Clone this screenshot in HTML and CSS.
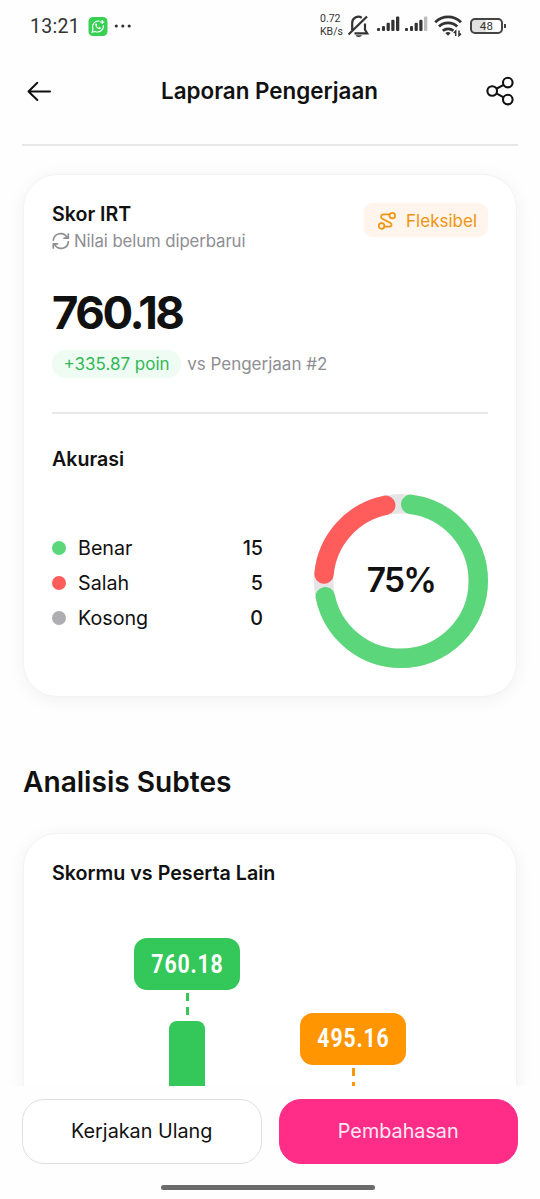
FILE: index.html
```html
<!DOCTYPE html>
<html lang="id">

<head>
    <meta charset="utf-8">
    <meta name="viewport" content="width=device-width, initial-scale=1">
    <title>Laporan Pengerjaan</title>
    <link rel="stylesheet" href="styles.css">
</head>

<body>
    <div class="screen">
        <div class="status">
            <span class="clock">13:21</span>
            <svg class="wa" width="20" height="19" viewBox="0 0 20 19">
                <rect x="0.5" y="0" width="19" height="19" rx="4.5" fill="#38cf55" />
                <path d="M11.8 4.2A5.8 5.8 0 0 0 5 12l-.9 3.2 3.2-.8a5.8 5.8 0 0 0 8.1-6" fill="none" stroke="#fff" stroke-width="1.1" />
                <path d="M7.5 6.7c-1.2 2 2.4 6 4.6 5.3.7-.3.9-.8.8-1.3l-1.5-.7-.8.8c-.9-.3-1.6-1-2-1.9l.6-.9-.6-1.4z" fill="#fff" />
                <path d="M14.3 3.1v4M12.3 5.1h4" stroke="#fff" stroke-width="1.2" />
            </svg>
            <svg class="dots" width="18" height="4" viewBox="0 0 18 4" fill="#333">
                <circle cx="2.3" cy="2" r="1.6" />
                <circle cx="8.8" cy="2" r="1.6" />
                <circle cx="15.2" cy="2" r="1.6" />
            </svg>
            <span class="speed">0.72<br>KB/s</span>
            <svg class="bell" width="23" height="24" viewBox="0 0 23 24" fill="none" stroke="#333" stroke-width="2.2">
                <path d="M4.2 16V9.2a6.2 6.2 0 0 1 9.6-5.4M17 9.5v6.2l2.2 3.6H6.5M.5 20.5 19 2.5" />
                <path d="M7.5 21.3H14a3.3 2.2 0 0 1-6.5 0z" fill="#333" stroke="none" />
            </svg>
            <svg class="signal" width="24" height="16" viewBox="0 0 24 16" fill="#333">
                <rect x="0" y="12" width="3" height="3" rx="1" />
                <rect x="5" y="10" width="3" height="5" rx="1" />
                <rect x="9.6" y="6.8" width="3.2" height="8.2" rx="1" />
                <rect x="14.3" y="3.8" width="3.2" height="11.2" rx="1" />
                <rect x="19" y="0.5" width="3.3" height="14.5" rx="1" />
            </svg>
            <svg class="signal" width="24" height="16" viewBox="0 0 24 16" fill="#333">
                <rect x="0" y="12" width="3" height="3" rx="1" />
                <rect x="5" y="10" width="3" height="5" rx="1" />
                <rect x="9.6" y="6.8" width="3.2" height="8.2" rx="1" />
                <rect x="14.3" y="3.8" width="3.2" height="11.2" rx="1" />
                <rect x="19" y="0.5" width="3.3" height="14.5" rx="1" fill="#bbb" />
            </svg>
            <svg class="wifi" width="29" height="22" viewBox="0 0 29 22" fill="none" stroke="#333" stroke-width="2.8">
                <path d="M1.2 7.2a18.5 18.5 0 0 1 25.8 0M5 11.6a13 13 0 0 1 18.2 0M8.8 15.8a8 8 0 0 1 10.6 0" />
                <path d="M11.3 18a4.5 4.5 0 0 1 5.4 0L14 20.8z" fill="#333" stroke="none" />
                <path d="M21.7 21v-5l-2 2M25 15.6v5l2-2" stroke-width="1.5" />
            </svg>
            <span class="battery">48</span>
            <i class="battery-tip"></i>
        </div>

        <div class="header">
            <svg width="26" height="24" viewBox="0 0 26 24" fill="none" stroke="#111" stroke-width="2" stroke-linecap="round" stroke-linejoin="round">
                <path d="M24 12.5H2.5M11.3 3.7 2.5 12.5l8.8 8.5" />
            </svg>
            <h1>Laporan Pengerjaan</h1>
            <svg width="28" height="30" viewBox="0 0 28 30" fill="none" stroke="#111" stroke-width="2.1">
                <circle cx="6.2" cy="15" r="4.8" />
                <circle cx="21.8" cy="6.6" r="4.8" />
                <circle cx="21.8" cy="23.6" r="4.8" />
                <path d="m10.4 12.7 7.2-3.8M10.4 17.3l7.2 4" />
            </svg>
        </div>

        <div class="content">
            <div class="card score-card">
                <div class="card-top">
                    <div>
                        <h3>Skor IRT</h3>
                        <div class="updated">
                            <svg width="18" height="18" viewBox="0 0 18 18" fill="none" stroke="#8e8e93" stroke-width="1.7" stroke-linecap="round" stroke-linejoin="round">
                                <path d="M1.3 8.2a7.3 7.3 0 0 1 13.6-2.9M16.3 2v4.2h-4.2M16.3 9.8a7.3 7.3 0 0 1-13.6 2.9M1.3 16v-4.2h4.2" />
                            </svg>
                            <span>Nilai belum diperbarui</span>
                        </div>
                    </div>
                    <div class="tag">
                        <svg width="20" height="20" viewBox="0 0 20 20" fill="none" stroke="#f09410" stroke-width="1.7" stroke-linecap="round">
                            <circle cx="15.3" cy="4.6" r="2.8" />
                            <circle cx="4.6" cy="15" r="2.8" />
                            <path d="M12.4 3.3H6.5a2.4 2.4 0 0 0-1.2 4.5l8.2 4.3a1.9 1.9 0 0 1-.9 3.6H7.6" />
                        </svg>
                        <span>Fleksibel</span>
                    </div>
                </div>
                <div class="score">760.18</div>
                <div class="compare">
                    <span class="gain">+335.87 poin</span>
                    <span>vs Pengerjaan #2</span>
                </div>
                <hr>
                <h3>Akurasi</h3>
                <div class="accuracy">
                    <div class="legend">
                        <div class="row"><i class="dot green"></i>Benar<b>15</b></div>
                        <div class="row"><i class="dot red"></i>Salah<b>5</b></div>
                        <div class="row"><i class="dot grey"></i>Kosong<b>0</b></div>
                    </div>
                    <div class="donut">
                        <svg width="174" height="174" viewBox="0 0 174 174">
                            <g fill="none" stroke-width="19.4" transform="rotate(-90 87 87)">
                                <circle cx="87" cy="87" r="77.3" stroke="#e5e5e7" />
                                <circle cx="87" cy="87" r="77.3" stroke="#ff5c5c" stroke-linecap="round" pathLength="360" stroke-dasharray="73.4 286.6" stroke-dashoffset="-275.2" />
                                <circle cx="87" cy="87" r="77.3" stroke="#5cd67a" stroke-linecap="round" pathLength="360" stroke-dasharray="251 109" stroke-dashoffset="-7.3" />
                            </g>
                        </svg>
                        <span class="percent">75%</span>
                    </div>
                </div>
            </div>

            <h2>Analisis Subtes</h2>

            <div class="card chart-card">
                <h3>Skormu vs Peserta Lain</h3>
                <div class="chart">
                    <div class="column mine">
                        <div class="value"><span>760.18</span></div>
                        <i class="dash"></i>
                        <i class="dash"></i>
                        <div class="bar"></div>
                    </div>
                    <div class="column others">
                        <div class="value"><span>495.16</span></div>
                        <i class="dash"></i>
                        <i class="dash"></i>
                        <div class="bar"></div>
                    </div>
                </div>
            </div>
        </div>

        <div class="footer">
            <div class="buttons">
                <button class="btn retry">Kerjakan Ulang</button>
                <button class="btn review">Pembahasan</button>
            </div>
            <div class="home"></div>
        </div>
    </div>
</body>

</html>
```

FILE: styles.css
```css
* {
    box-sizing: border-box;
}

body {
    margin: 0;
    background: #fefefe;
    color: #111;
    font-family: Inter, "Liberation Sans", sans-serif;
}

h1, h2, h3 {
    margin: 0;
    font-weight: 600;
}

svg {
    display: block;
    flex: none;
}

.screen {
    display: flex;
    flex-direction: column;
    width: 540px;
    height: 1199px;
    overflow: hidden;
}

/* status bar */
.status {
    display: flex;
    align-items: center;
    flex: none;
    height: 52px;
    padding: 0 34px 0 30px;
    color: #333;
    font-family: Roboto, sans-serif;
}

.clock {
    width: 58px;
    font-size: 19.5px;
    letter-spacing: 0.3px;
}

.dots {
    margin-left: 6px;
}

.speed {
    margin-left: auto;
    margin-top: -3px;
    width: 28px;
    font-size: 10.5px;
    line-height: 13px;
    white-space: nowrap;
}

.signal {
    margin: -4px 0 0 4px;
}

.bell {
    margin-right: 2px;
}

.wifi {
    margin-left: 5px;
}

.battery {
    width: 33px;
    height: 16px;
    margin-left: 7px;
    border: 2px solid #444;
    border-radius: 5px;
    background: linear-gradient(90deg, #e2e2e2 48%, #fff 48%);
    font-size: 11.5px;
    font-weight: 400;
    line-height: 12.5px;
    letter-spacing: 0.3px;
    text-align: center;
}

.battery-tip {
    width: 2px;
    height: 4px;
    margin-left: 1px;
    background: #444;
}

/* header */
.header {
    display: flex;
    align-items: center;
    justify-content: space-between;
    flex: none;
    height: 94px;
    margin: 0 22px;
    padding: 0 4px 15px;
    border-bottom: 2px solid #e8e8e8;
}

.header h1 {
    padding-left: 1px;
    font-size: 22.4px;
}

/* cards */
.content {
    flex: 1;
    min-height: 0;
    padding: 28px 23px 0;
    overflow: hidden;
}

.card {
    padding: 26px 28px 0;
    border: 1px solid #f3f3f4;
    border-radius: 34px;
    background: #fff;
    box-shadow: 0 3px 18px rgba(0, 0, 0, 0.055);
}

.card h3 {
    font-size: 19.6px;
    line-height: 26px;
}

.score-card {
    height: 523px;
}

.card-top {
    display: flex;
    justify-content: space-between;
}

.updated {
    display: flex;
    align-items: center;
    gap: 4px;
    height: 28px;
    color: #8e8e93;
    font-size: 16.8px;
    letter-spacing: -0.1px;
}

.tag {
    display: flex;
    align-items: center;
    gap: 9px;
    height: 34px;
    margin-top: 2px;
    padding: 1px 11px 0 13px;
    border-radius: 9px;
    background: #fff5ec;
    color: #f09410;
    font-size: 17px;
}

.score {
    margin-top: 30px;
    font-size: 45.5px;
    font-weight: 700;
    line-height: 56px;
    letter-spacing: -2.4px;
}

.compare {
    display: flex;
    align-items: center;
    gap: 6px;
    margin-top: 9px;
    color: #8e8e93;
    font-size: 17px;
}

.gain {
    height: 28px;
    padding: 0 11.5px;
    border-radius: 14px;
    background: #effcf3;
    color: #34b857;
    line-height: 28px;
}

.card hr {
    height: 2px;
    margin: 34px 0 32px;
    border: 0;
    background: #e8e8e8;
}

.accuracy {
    display: flex;
    align-items: center;
    justify-content: space-between;
    margin-top: 22px;
}

.legend {
    width: 211px;
    margin-top: 4px;
}

.row {
    display: flex;
    align-items: center;
    height: 35.2px;
    font-size: 19.7px;
}

.row b {
    margin-left: auto;
    font-weight: 500;
}

.dot {
    width: 14px;
    height: 14px;
    margin-right: 12px;
    border-radius: 50%;
}

.green {
    background: #5cd67a;
}

.red {
    background: #ff5c5c;
}

.grey {
    background: #aeaeb2;
}

.donut {
    display: grid;
}

.donut > * {
    grid-area: 1 / 1;
}

.percent {
    place-self: center;
    padding-bottom: 2px;
    font-size: 33.5px;
    font-weight: 600;
    letter-spacing: -1.8px;
}

h2 {
    margin: 66px 0 32px;
    font-size: 28.1px;
    line-height: 38px;
}

/* bar chart */
.chart-card {
    height: 500px;
}

.chart-card h3 {
    font-size: 19.7px;
}

.chart {
    display: grid;
    grid-template-columns: 1fr 1fr;
    height: 400px;
    margin-top: 52px;
    padding: 0 52px;
}

.column {
    display: flex;
    flex-direction: column;
    align-items: center;
}

.mine {
    --bar: #34c759;
}

.others {
    --bar: #ff9500;
    margin-top: 74.5px;
}

.value {
    display: flex;
    align-items: center;
    justify-content: center;
    flex: none;
    width: 105.5px;
    height: 52px;
    margin-bottom: 3px;
    border-radius: 13px;
    background: var(--bar);
    color: #fff;
    font-family: Roboto, sans-serif;
    font-size: 25px;
    font-weight: 700;
    letter-spacing: 1px;
}

/* narrow numerals */
.value span {
    transform: scaleX(0.85);
}

.dash {
    width: 3px;
    height: 8px;
    margin-bottom: 6px;
    background: var(--bar);
}

.bar {
    flex: 1;
    width: 36px;
    border-radius: 8px 8px 0 0;
    background: var(--bar);
}

/* bottom actions */
.footer {
    flex: none;
    height: 113px;
    padding: 13px 22px 0;
    background: #fefefe;
}

.buttons {
    display: flex;
    gap: 17px;
}

.btn {
    flex: 1;
    height: 65px;
    padding: 0 0 2px;
    border: 1px solid #dfdfdf;
    border-radius: 22px;
    background: #fff;
    color: #111;
    font-family: inherit;
    font-size: 19.8px;
}

.review {
    border-color: #ff2d87;
    background: #ff2d87;
    color: #ffe8f3;
}

.home {
    width: 214px;
    height: 5px;
    margin: 21px 0 0 139px;
    border-radius: 3px;
    background: #6b6b6b;
}
```
